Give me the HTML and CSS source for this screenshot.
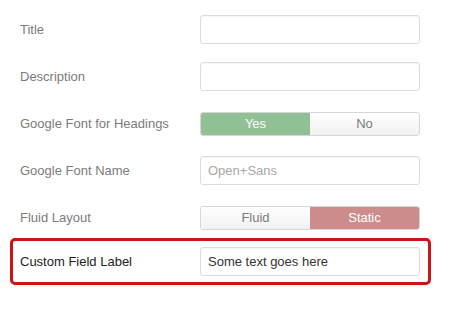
FILE: index.html
```html
<!DOCTYPE html>
<html>
  <head>
    <meta charset="utf-8">
    <title>Settings</title>
    <link rel="stylesheet" href="styles.css">
  </head>
  <body>
    <div class="form">
      <div class="row">
        <label class="label" for="title">Title</label>
        <input class="field" id="title" type="text">
      </div>

      <div class="row">
        <label class="label" for="desc">Description</label>
        <input class="field" id="desc" type="text">
      </div>

      <div class="row">
        <span class="label">Google Font for Headings</span>
        <div class="toggle">
          <span class="opt on-yes">Yes</span>
          <span class="opt">No</span>
        </div>
      </div>

      <div class="row">
        <label class="label" for="fontname">Google Font Name</label>
        <input class="field" id="fontname" type="text" placeholder="Open+Sans">
      </div>

      <div class="row">
        <span class="label">Fluid Layout</span>
        <div class="toggle">
          <span class="opt">Fluid</span>
          <span class="opt on-static">Static</span>
        </div>
      </div>

      <div class="row highlight">
        <label class="label" for="custom">Custom Field Label</label>
        <input class="field" id="custom" type="text" value="Some text goes here">
      </div>
    </div>
  </body>
</html>
```

FILE: styles.css
```css
* {
    box-sizing: border-box;
}
body {
    margin: 0;
    background: #fff;
    font-family: "Liberation Sans", Arial, sans-serif;
    font-size: 13px;
}
.form {
    display: flex;
    flex-direction: column;
    gap: 12px;
    width: 421px;
    margin-left: 10px;
    padding-top: 12px;
}
.row {
    display: grid;
    grid-template-columns: 180px 220px;
    align-items: center;
    height: 35px;
    padding: 0 8px 0 7px;
    border: 3px solid transparent;
}
.label {
    color: #7b7b7b;
}
.field {
    height: 29px;
    width: 220px;
    margin: 0;
    padding: 0 7px;
    border: 1px solid #dcdcdc;
    border-radius: 3px;
    box-shadow: inset 0 1px 1px rgba(0, 0, 0, 0.04);
    font-family: inherit;
    font-size: 13px;
    color: #333;
    outline: none;
}
.field::placeholder {
    color: #a8a8a8;
}
.toggle {
    display: flex;
    height: 24px;
    border: 1px solid #d6d6d6;
    border-radius: 3px;
    overflow: hidden;
}
.opt {
    flex: 1;
    display: flex;
    align-items: center;
    justify-content: center;
    color: #7b7b7b;
    background: linear-gradient(#ffffff, #f1f1f1);
}
.opt.on-yes {
    background: #91c095;
    color: #fff;
}
.opt.on-static {
    background: #cd8c8c;
    color: #fff;
}
.highlight {
    height: 47px;
    margin-top: -9px;
    padding: 6px 8px 6px 7px;
    border-color: #cc1414;
    border-radius: 5px;
}
.highlight .label {
    color: #222;
}
```
